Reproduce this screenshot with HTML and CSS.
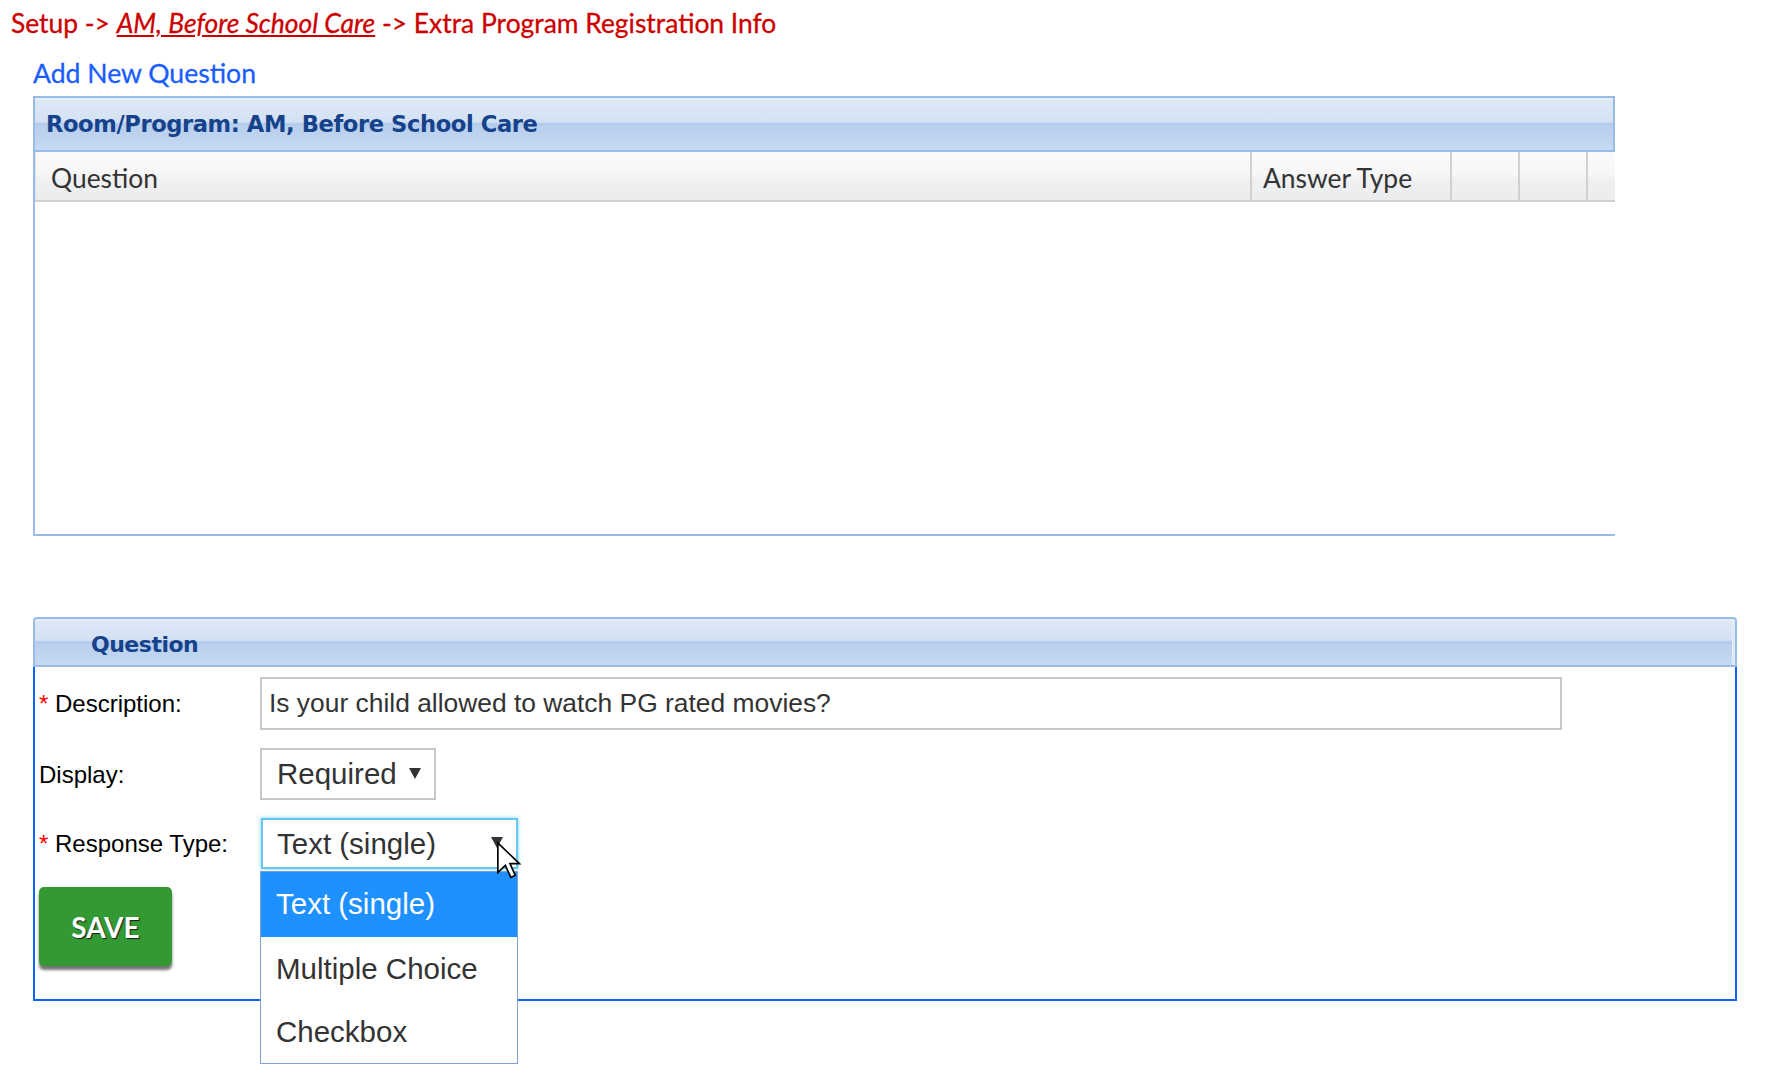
FILE: index.html
```html
<!DOCTYPE html>
<html>
<head>
<meta charset="utf-8">
<title>Extra Program Registration Info</title>
<link rel="stylesheet" href="styles.css">
</head>
<body>
<div class="page">
<div class="crumb">Setup -&gt; <a class="crumb-link" href="#">AM, Before School Care</a> -&gt; Extra Program Registration Info</div>
<div class="content">
  <a class="add-link" href="#">Add New Question</a>
  <div class="grid-panel">
    <div class="grid-title">Room/Program: AM, Before School Care</div>
    <div class="grid-head">
      <div class="gh-cell gh-first">Question</div>
      <div class="gh-cell">Answer Type</div>
      <div class="gh-cell"></div>
      <div class="gh-cell"></div>
      <div class="gh-cell"></div>
    </div>
    <div class="grid-body"></div>
  </div>

  <div class="q-panel">
    <div class="q-title">Question</div>
    <div class="q-body">
      <div class="lbl"><span class="req">*</span> Description:</div>
      <div class="input">Is your child allowed to watch PG rated movies?</div>

      <div class="lbl">Display:</div>
      <div class="select sel-display">
        <span class="sel-text">Required</span>
        <svg class="sel-arrow" width="12" height="11" viewBox="0 0 12 11"><polygon points="0,0 12,0 6,11" fill="#333"/></svg>
      </div>

      <div class="lbl"><span class="req">*</span> Response Type:</div>
      <div class="select sel-response">
        <span class="sel-text">Text (single)</span>
        <svg class="sel-arrow" width="12" height="11" viewBox="0 0 12 11"><polygon points="0,0 12,0 6,11" fill="#333"/></svg>
        <div class="dropdown">
          <div class="opt opt-on">Text (single)</div>
          <div class="opt">Multiple Choice</div>
          <div class="opt">Checkbox</div>
        </div>
        <svg class="cursor" width="26" height="39" viewBox="0 0 14 21"><path d="M1,1 L1,17 L5,13.2 L8,19.6 L10.4,18.5 L7.5,12.2 L12.6,12.2 Z" fill="#fff" stroke="#000" stroke-width="0.9" stroke-linejoin="miter"/></svg>
      </div>

      <div class="btn-cell"><button class="save">SAVE</button></div>
    </div>
  </div>
</div>
</div>
</body>
</html>
```

FILE: styles.css
```css
html, body {
  margin: 0;
  padding: 0;
  background: #fff;
}
html {
  min-height: 1087px;
}
body {
  font-family: "Liberation Sans", Arial, sans-serif;
  color: #000;
  min-height: 1087px;
}
.page {
  min-height: 1087px;
}
.crumb {
  font-family: Lato, "Liberation Sans", sans-serif;
  font-size: 26.4px;
  line-height: 46px;
  height: 46px;
  padding-left: 11px;
  color: #cc0000;
  white-space: nowrap;
  -webkit-text-stroke: 0.3px #cc0000;
}
.crumb-link {
  color: #cc0000;
  font-style: italic;
  text-decoration: underline;
}
.content {
  padding-left: 33px;
}
.add-link {
  display: block;
  margin-top: 12px;
  font-family: Lato, "Liberation Sans", sans-serif;
  font-size: 26.6px;
  line-height: 30px;
  height: 30px;
  color: #1a5dff;
  text-decoration: none;
  -webkit-text-stroke: 0.3px #1a5dff;
  white-space: nowrap;
}
.grid-panel {
  margin-top: 8px;
  width: 1580px;
  border-left: 2px solid #99bbe8;
}
.grid-title {
  border-top: 2px solid #99bbe8;
  border-right: 2px solid #99bbe8;
  border-bottom: 2px solid #99bbe8;
  height: 52px;
  line-height: 52px;
  padding-left: 11px;
  font-family: "DejaVu Sans", Verdana, sans-serif;
  font-weight: bold;
  font-size: 22.6px;
  letter-spacing: -0.4px;
  color: #15428b;
  background: linear-gradient(#dfe9f6 0%, #d3e1f3 46%, #b0c9ec 50%, #b9cfee 54%, #c6d9f2 100%);
  box-shadow: inset 0 2px 0 #e6eef9;
  white-space: nowrap;
}
.grid-head {
  display: grid;
  grid-template-columns: 1fr 200px 68px 68px 29px;
  height: 48px;
  border-bottom: 2px solid #d0d0d0;
  background: linear-gradient(#fafafa 0%, #f7f7f7 45%, #f0f1f2 55%, #ebecee 100%);
}
.gh-cell {
  border-left: 2px solid #d0d0d0;
  padding-left: 11px;
  padding-top: 9px;
  font-family: Lato, "Liberation Sans", sans-serif;
  font-size: 26.4px;
  line-height: 34px;
  color: #333;
  white-space: nowrap;
}
.gh-cell.gh-first {
  border-left: 1px solid #e4e4e4;
  padding-left: 15px;
}
.grid-body {
  height: 332px;
  border-bottom: 2px solid #99bbe8;
  background: #fff;
}
.q-panel {
  margin-top: 81px;
  width: 1704px;
}
.q-title {
  border: 2px solid #99bbe8;
  border-radius: 4px 4px 0 0;
  padding-top: 5px;
  height: 41px;
  line-height: 41px;
  padding-left: 56px;
  font-family: "DejaVu Sans", Verdana, sans-serif;
  font-weight: bold;
  font-size: 22px;
  letter-spacing: -0.5px;
  color: #15428b;
  background: linear-gradient(#dfe9f6 0%, #d3e1f3 46%, #b0c9ec 50%, #b9cfee 54%, #c6d9f2 100%);
  box-shadow: inset 0 2px 0 #e6eef9, inset -3px 0 0 #e0eaf7;
}
.q-body {
  border: 2px solid #0a64ff;
  border-top: none;
  display: grid;
  grid-template-columns: 220px 1fr;
  row-gap: 18px;
  align-items: center;
  padding: 10px 0 33px 5px;
}
.lbl {
  font-size: 24px;
  line-height: 27px;
  color: #000;
  white-space: nowrap;
  margin-left: -1px;
}
.req {
  color: #ff0000;
}
.input {
  height: 49px;
  border: 2px solid #c8c8c8;
  box-sizing: content-box;
  padding-left: 7px;
  font-size: 26.4px;
  line-height: 49px;
  color: #333;
  white-space: nowrap;
  width: 1291px;
}
.select {
  position: relative;
  display: flex;
  align-items: center;
  justify-content: space-between;
  border: 2px solid #c8c8c8;
  font-size: 29.5px;
  color: #333;
  box-sizing: border-box;
}
.sel-display {
  width: 176px;
  height: 52px;
  padding: 0 13px 0 15px;
}
.sel-response {
  width: 257px;
  height: 51px;
  padding: 0 13px 0 14px;
  border-color: #66c8ee;
  box-shadow: 0 0 4px rgba(102, 200, 238, 0.9);
  margin-left: 1px;
}
.sel-text {
  line-height: 34px;
  white-space: nowrap;
}
.sel-arrow {
  display: block;
  margin-top: -2px;
}
.dropdown {
  position: absolute;
  left: -3px;
  top: 51px;
  width: 256px;
  border: 1px solid #7f9fd6;
  background: #fff;
  z-index: 5;
}
.opt {
  height: 64px;
  line-height: 64px;
  padding-left: 15px;
  font-size: 29.5px;
  color: #333;
  white-space: nowrap;
}
.opt-on {
  height: 65px;
  line-height: 64px;
  background: #1e90ff;
  color: #fff;
}
.opt:last-child {
  height: 62px;
  line-height: 62px;
}
.cursor {
  position: absolute;
  left: 233px;
  top: 21px;
  z-index: 6;
}
.btn-cell {
  grid-column: 1 / 2;
}
.save {
  display: block;
  width: 133px;
  height: 79px;
  margin-left: -1px;
  border: none;
  border-radius: 5px;
  background: #339933;
  color: #fff;
  font-family: Lato, "Liberation Sans", sans-serif;
  font-weight: bold;
  font-size: 28px;
  text-shadow: 1px 1px 1px #1a1a1a;
  box-shadow: 0 4px 3px rgba(0, 0, 0, 0.55);
  padding: 0;
}
```
